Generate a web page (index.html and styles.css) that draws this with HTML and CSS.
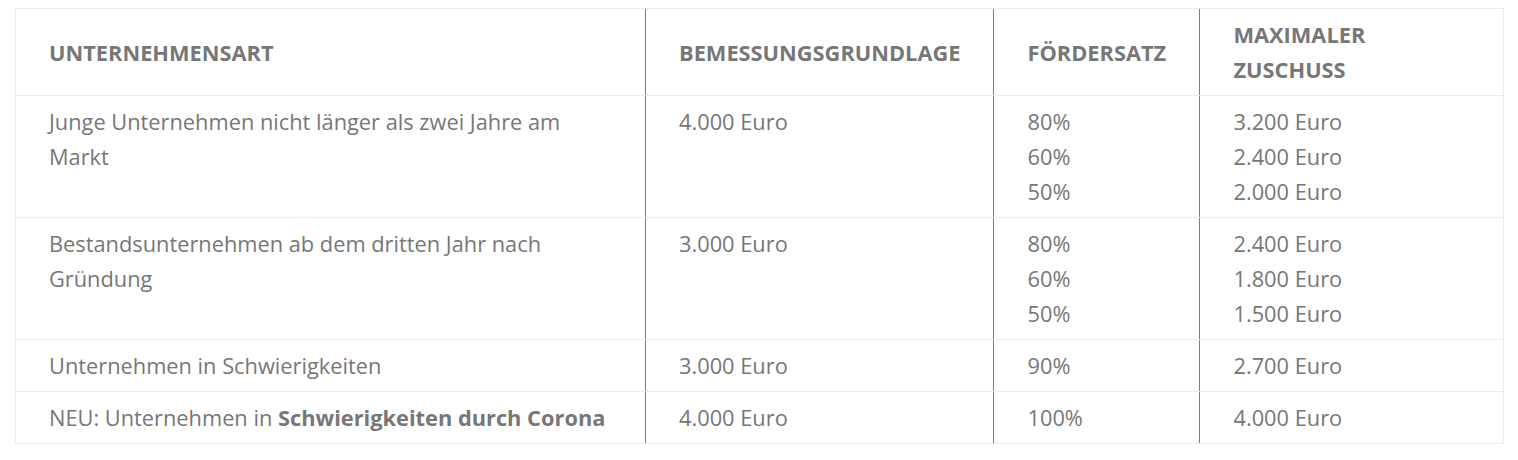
FILE: index.html
```html
<!DOCTYPE html>
<html lang="de">
<head>
<meta charset="utf-8">
<link rel="stylesheet" href="styles.css">
</head>
<body>
<div class="wrap">
<table class="tbl">
  <thead>
    <tr>
      <th class="c1">Unternehmensart</th>
      <th class="c2">Bemessungsgrundlage</th>
      <th class="c3">Fördersatz</th>
      <th class="c4">Maximaler<br>Zuschuss</th>
    </tr>
  </thead>
  <tbody>
    <tr>
      <td>Junge Unternehmen nicht länger als zwei Jahre am Markt</td>
      <td>4.000 Euro</td>
      <td>80%<br>60%<br>50%</td>
      <td>3.200 Euro<br>2.400 Euro<br>2.000 Euro</td>
    </tr>
    <tr>
      <td>Bestandsunternehmen ab dem dritten Jahr nach Gründung</td>
      <td>3.000 Euro</td>
      <td>80%<br>60%<br>50%</td>
      <td>2.400 Euro<br>1.800 Euro<br>1.500 Euro</td>
    </tr>
    <tr>
      <td>Unternehmen in Schwierigkeiten</td>
      <td>3.000 Euro</td>
      <td>90%</td>
      <td>2.700 Euro</td>
    </tr>
    <tr>
      <td>NEU: Unternehmen in <strong>Schwierigkeiten durch Corona</strong></td>
      <td>4.000 Euro</td>
      <td>100%</td>
      <td>4.000 Euro</td>
    </tr>
  </tbody>
</table>
</div>
</body>
</html>
```

FILE: styles.css
```css
html, body {
  margin: 0;
  padding: 0;
  background: #fff;
}
.wrap {
  padding: 8px 14px 0 15px;
}
.tbl {
  width: 1489px;
  border-collapse: collapse;
  border: 1px solid #ececec;
  font-family: "Open Sans", sans-serif;
  font-size: 21.8px;
  line-height: 35px;
  color: #777;
}
.tbl th, .tbl td {
  border-top: 1px solid #ececec;
  border-bottom: 1px solid #ececec;
  border-left: 1px solid #7c7c7c;
  padding: 8px 33px 8px 33px;
  text-align: left;
}
.tbl th:first-child, .tbl td:first-child {
  border-left: 1px solid #ececec;
}
.tbl th {
  font-weight: 700;
  text-transform: uppercase;
  vertical-align: middle;
  color: #777;
}
.tbl td {
  vertical-align: top;
}
.tbl strong {
  font-weight: 700;
}
.c1 { width: 563px; }
.c2 { width: 281px; }
.c3 { width: 139px; }
.c4 { width: auto; }
```
